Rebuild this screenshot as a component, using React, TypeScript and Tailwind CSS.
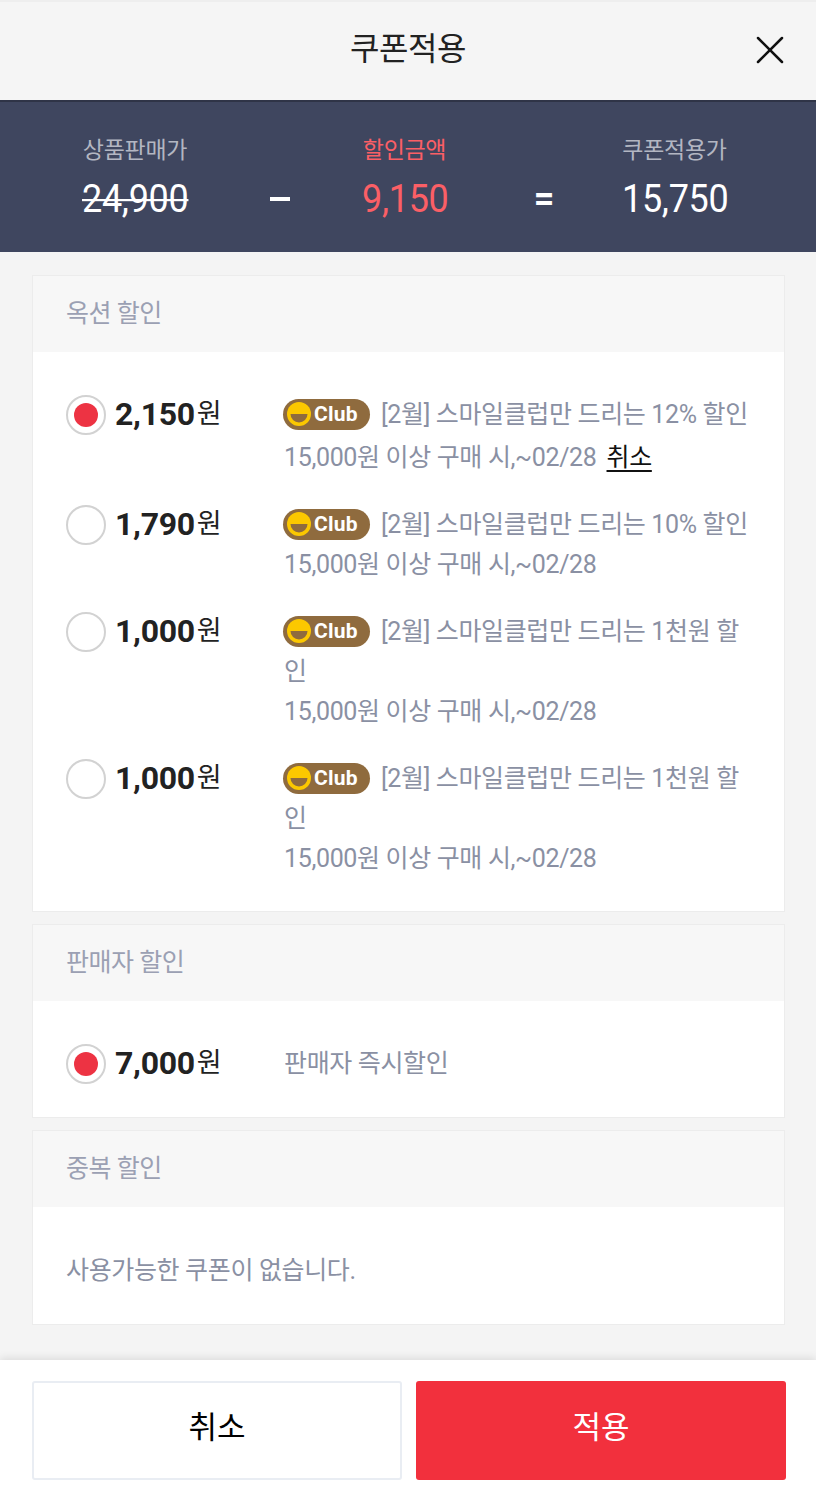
import { X } from 'lucide-react';

type Coupon = {
  amount: string;
  title?: string;
  sub?: string;
  checked?: boolean;
  cancel?: boolean;
  plain?: string;
};

const optionCoupons: Coupon[] = [
  { amount: '2,150', title: '[2월] 스마일클럽만 드리는 12% 할인', sub: '15,000원 이상 구매 시,~02/28', checked: true, cancel: true },
  { amount: '1,790', title: '[2월] 스마일클럽만 드리는 10% 할인', sub: '15,000원 이상 구매 시,~02/28' },
  { amount: '1,000', title: '[2월] 스마일클럽만 드리는 1천원 할인', sub: '15,000원 이상 구매 시,~02/28' },
  { amount: '1,000', title: '[2월] 스마일클럽만 드리는 1천원 할인', sub: '15,000원 이상 구매 시,~02/28' },
];

function ClubBadge() {
  return (
    <span className="inline-flex items-center align-[-3px] -ml-[1px] w-[87px] h-[31px] mr-[11px] pl-[4px] rounded-full bg-[#8f6b3e]">
      <svg width="24" height="24" viewBox="0 0 24 24" className="shrink-0">
        <circle cx="12" cy="12" r="12" fill="#fcc800" />
        <path d="M3.5 12h17a8.5 8.5 0 0 1-17 0z" fill="#8f6b3e" />
      </svg>
      <span className="ml-[3px] text-[21px] leading-none font-bold tracking-[0.2px] text-white">Club</span>
    </span>
  );
}

function Radio({ checked }: { checked?: boolean }) {
  return (
    <span className="flex items-center justify-center w-[40px] h-[40px] shrink-0 rounded-full border-2 border-[#d2d2d2] bg-white">
      {checked && <span className="w-[24px] h-[24px] rounded-full bg-[#ed3343]" />}
    </span>
  );
}

function Row({ coupon }: { coupon: Coupon }) {
  return (
    <div className="flex items-start">
      <Radio checked={coupon.checked} />
      <div className="w-[178px] pl-[9px] h-[38px] flex items-center text-[#222] text-[32px] tracking-[-0.3px]">
        <span className="font-bold">{coupon.amount}</span>
        <span className="ml-[2px] text-[27px]">원</span>
      </div>
      <div className="flex-1 text-[25px] leading-[40px] tracking-[-0.35px] text-[#8a90a3] break-all">
        {coupon.plain ? (
          coupon.plain
        ) : (
          <>
            <ClubBadge />
            {coupon.title}
            <br />
            <span className={coupon.cancel ? 'inline-block pt-[3px]' : ''}>
              {coupon.sub}
              {coupon.cancel && <span className="ml-[10px] text-[#111] underline underline-offset-4">취소</span>}
            </span>
          </>
        )}
      </div>
    </div>
  );
}

function Card({ title, children }: { title: string; children: React.ReactNode }) {
  return (
    <section className="border border-[#ececec] bg-white">
      <h2 className="h-[76px] px-[33px] flex items-center bg-[#f7f7f7] text-[25px] tracking-[-0.5px] text-[#9ba0b3]">{title}</h2>
      {children}
    </section>
  );
}

export default function App() {
  return (
    <div className="w-[816px] h-[1492px] flex flex-col bg-[#f4f4f4] overflow-hidden font-['Roboto','Noto_Sans_CJK_KR',sans-serif]">
      {/* Header */}
      <header className="relative h-[102px] shrink-0 flex items-center justify-center pb-[4px] bg-[#f5f5f5] border-t-2 border-t-[#eeeeee] border-b-2 border-b-[#2f3447]">
        <h1 className="text-[32px] tracking-[-0.5px] text-[#222]">쿠폰적용</h1>
        <X className="absolute right-[22px] top-[24px] text-[#111]" size={48} strokeWidth={2.5} absoluteStrokeWidth />
      </header>

      {/* Price summary */}
      <div className="h-[150px] shrink-0 flex items-start pt-[34px] pl-[82px] bg-[#3f465f] text-center">
        <div className="w-[106px]">
          <p className="text-[23px] leading-[30px] tracking-[-0.3px] text-[#b3b6c2]">상품판매가</p>
          <p className="mt-[10px] scale-y-110 text-[36px] leading-[46px] tracking-[-0.3px] text-white line-through decoration-2">24,900</p>
        </div>
        <span className="ml-[82px] w-[20px] h-[4px] mt-[61px] bg-white" />
        <div className="ml-[72px] w-[85px]">
          <p className="text-[23px] leading-[30px] tracking-[-0.3px] text-[#fb5f66]">할인금액</p>
          <p className="mt-[10px] scale-y-110 text-[36px] leading-[46px] tracking-[-0.3px] text-[#fb5f66]">9,150</p>
        </div>
        <span className="ml-[86px] mt-[40px] w-[22px] text-[36px] leading-[46px] font-bold text-white">=</span>
        <div className="ml-[67px] w-[105px]">
          <p className="text-[23px] leading-[30px] tracking-[-0.3px] text-[#b3b6c2]">쿠폰적용가</p>
          <p className="mt-[10px] scale-y-110 text-[36px] leading-[46px] tracking-[-0.3px] text-white">15,750</p>
        </div>
      </div>

      {/* Coupon lists */}
      <main className="flex-1 flex flex-col gap-[12px] pt-[23px] pl-[32px] pr-[31px]">
        <Card title="옥션 할인">
          <div className="flex flex-col gap-[27px] pt-[43px] pb-[32px] pl-[33px] pr-[26px]">
            {optionCoupons.map((c, i) => (
              <Row key={i} coupon={c} />
            ))}
          </div>
        </Card>
        <Card title="판매자 할인">
          <div className="pt-[43px] pb-[33px] pl-[33px] pr-[26px]">
            <Row coupon={{ amount: '7,000', plain: '판매자 즉시할인', checked: true }} />
          </div>
        </Card>
        <Card title="중복 할인">
          <p className="px-[33px] pt-[44px] pb-[33px] text-[25px] leading-[40px] tracking-[-0.35px] text-[#8a90a3]">사용가능한 쿠폰이 없습니다.</p>
        </Card>
      </main>

      {/* Footer buttons */}
      <footer className="h-[132px] shrink-0 flex gap-[14px] pt-[21px] pl-[32px] bg-white shadow-[0_-2px_8px_rgba(0,0,0,0.1)]">
        <button className="w-[370px] h-[99px] shrink-0 pb-[4px] rounded-[3px] border-2 border-[#e9edf3] bg-white text-[31px] text-black">취소</button>
        <button className="w-[370px] h-[99px] shrink-0 pb-[4px] rounded-[3px] bg-[#f2303d] text-[31px] text-white">적용</button>
      </footer>
    </div>
  );
}
